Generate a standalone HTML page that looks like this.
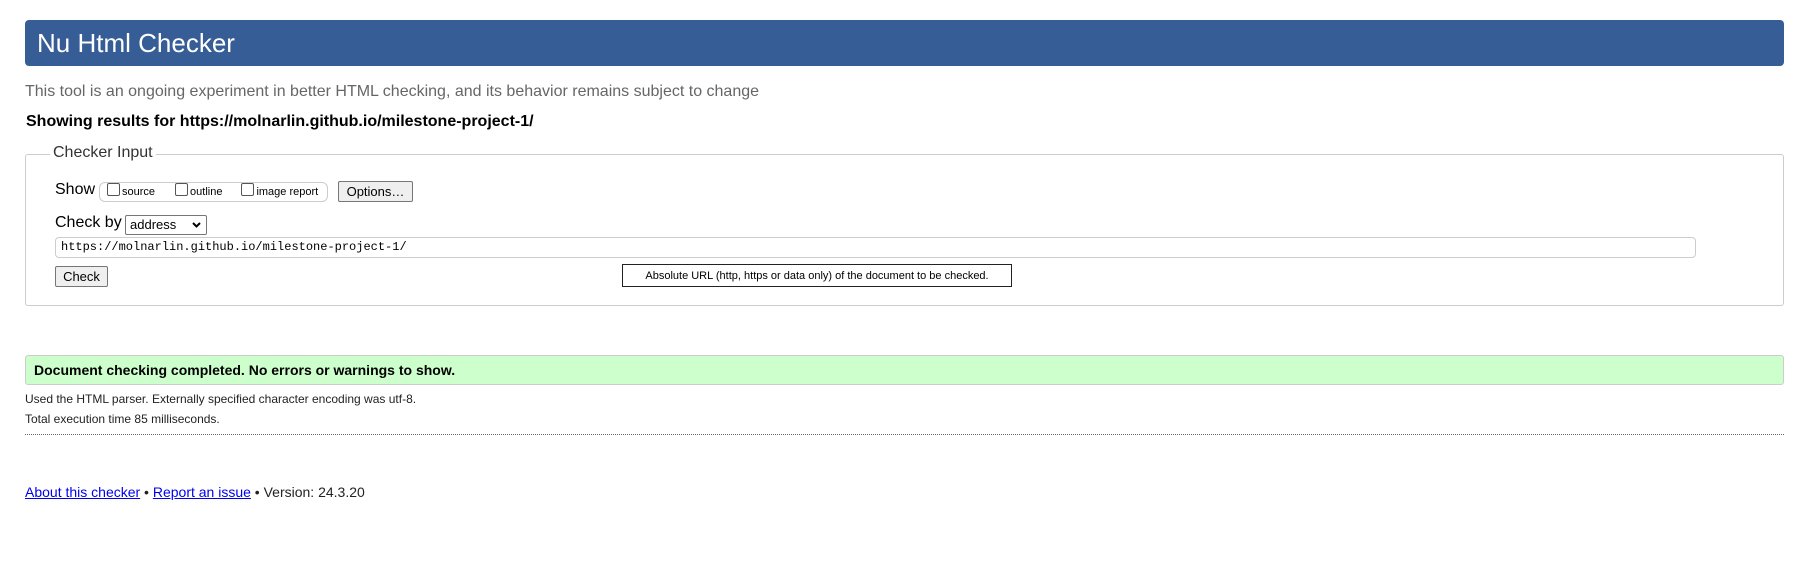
<!DOCTYPE html>
<html><head><meta charset="utf-8"><style>
body{margin:0;background:#fff;font-family:"Liberation Sans",Arial,sans-serif;color:#000;position:relative;width:1809px;height:585px;overflow:hidden}
.a{position:absolute;white-space:nowrap}
#hd{left:25px;top:20px;width:1759px;height:46px;background:#365d95;border-radius:4px;color:#fff;font-size:26px;line-height:46px;text-indent:12px}
#fs{left:25px;top:154px;width:1757px;height:150px;border:1px solid #ccc;border-radius:3px}
.cb{display:inline-block;width:11px;height:11px;border:1px solid #555;border-radius:2px;vertical-align:-1px;margin-right:2px;background:#fff}
.btn{background:#efefef;border:1px solid #767676;border-radius:2px;font-size:13px;text-align:center}
a{color:#00e;text-decoration:underline}
</style></head><body>
<div class="a" id="hd">Nu Html Checker</div>
<div class="a" style="left:25px;top:83px;font-size:16px;color:#666">This tool is an ongoing experiment in better HTML checking, and its behavior remains subject to change</div>
<div class="a" style="left:26px;top:113px;font-size:16px;font-weight:bold">Showing results for https://molnarlin.github.io/milestone-project-1/</div>
<div class="a" id="fs"></div>
<div class="a" style="left:50px;top:144px;background:#fff;padding:0 3px;font-size:16px;color:#333">Checker Input</div>
<div class="a" style="left:55px;top:181px;font-size:16px">Show</div>
<div class="a" style="left:99px;top:182px;width:227px;height:18px;border:1px solid #ccc;border-radius:6px;font-size:11px;line-height:19px"><span style="margin-left:7px" class="cb"></span>source<span class="cb" style="margin-left:20px"></span>outline<span class="cb" style="margin-left:19px"></span>image report</div>
<div class="a btn" style="left:338px;top:181px;width:73px;height:19px;line-height:19px">Options…</div>
<div class="a" style="left:55px;top:214px;font-size:16px">Check by</div>
<div class="a" style="left:125px;top:215px;width:80px;height:18px;border:1px solid #767676;border-radius:2px;font-size:13px;line-height:18px;text-indent:4px">address<svg style="position:absolute;right:5px;top:6px" width="9" height="6" viewBox="0 0 9 6"><path d="M1 1L4.5 4.5L8 1" stroke="#000" stroke-width="2" fill="none"/></svg></div>
<div class="a" style="left:55px;top:237px;width:1639px;height:19px;border:1px solid #ccc;border-radius:4px;font-family:'Liberation Mono',monospace;font-size:12px;line-height:19px;text-indent:5px">https://molnarlin.github.io/milestone-project-1/</div>
<div class="a btn" style="left:55px;top:266px;width:51px;height:19px;line-height:19px">Check</div>
<div class="a" style="left:622px;top:264px;width:388px;height:21px;border:1px solid #222;font-size:11px;line-height:22px;text-align:center">Absolute URL (http, https or data only) of the document to be checked.</div>
<div class="a" style="left:25px;top:355px;width:1757px;height:28px;background:#ccffcc;border:1px solid #ccc;border-radius:3px;font-size:14px;font-weight:bold;line-height:28px;text-indent:8px">Document checking completed. No errors or warnings to show.</div>
<div class="a" style="left:25px;top:392px;font-size:12px;color:#222">Used the HTML parser. Externally specified character encoding was utf-8.</div>
<div class="a" style="left:25px;top:412px;font-size:12px;color:#222">Total execution time 85 milliseconds.</div>
<div class="a" style="left:25px;top:434px;width:1759px;border-top:1px dotted #666"></div>
<div class="a" style="left:25px;top:484px;font-size:14px;color:#222"><a>About this checker</a> • <a>Report an issue</a> • Version: 24.3.20</div>
</body></html>
